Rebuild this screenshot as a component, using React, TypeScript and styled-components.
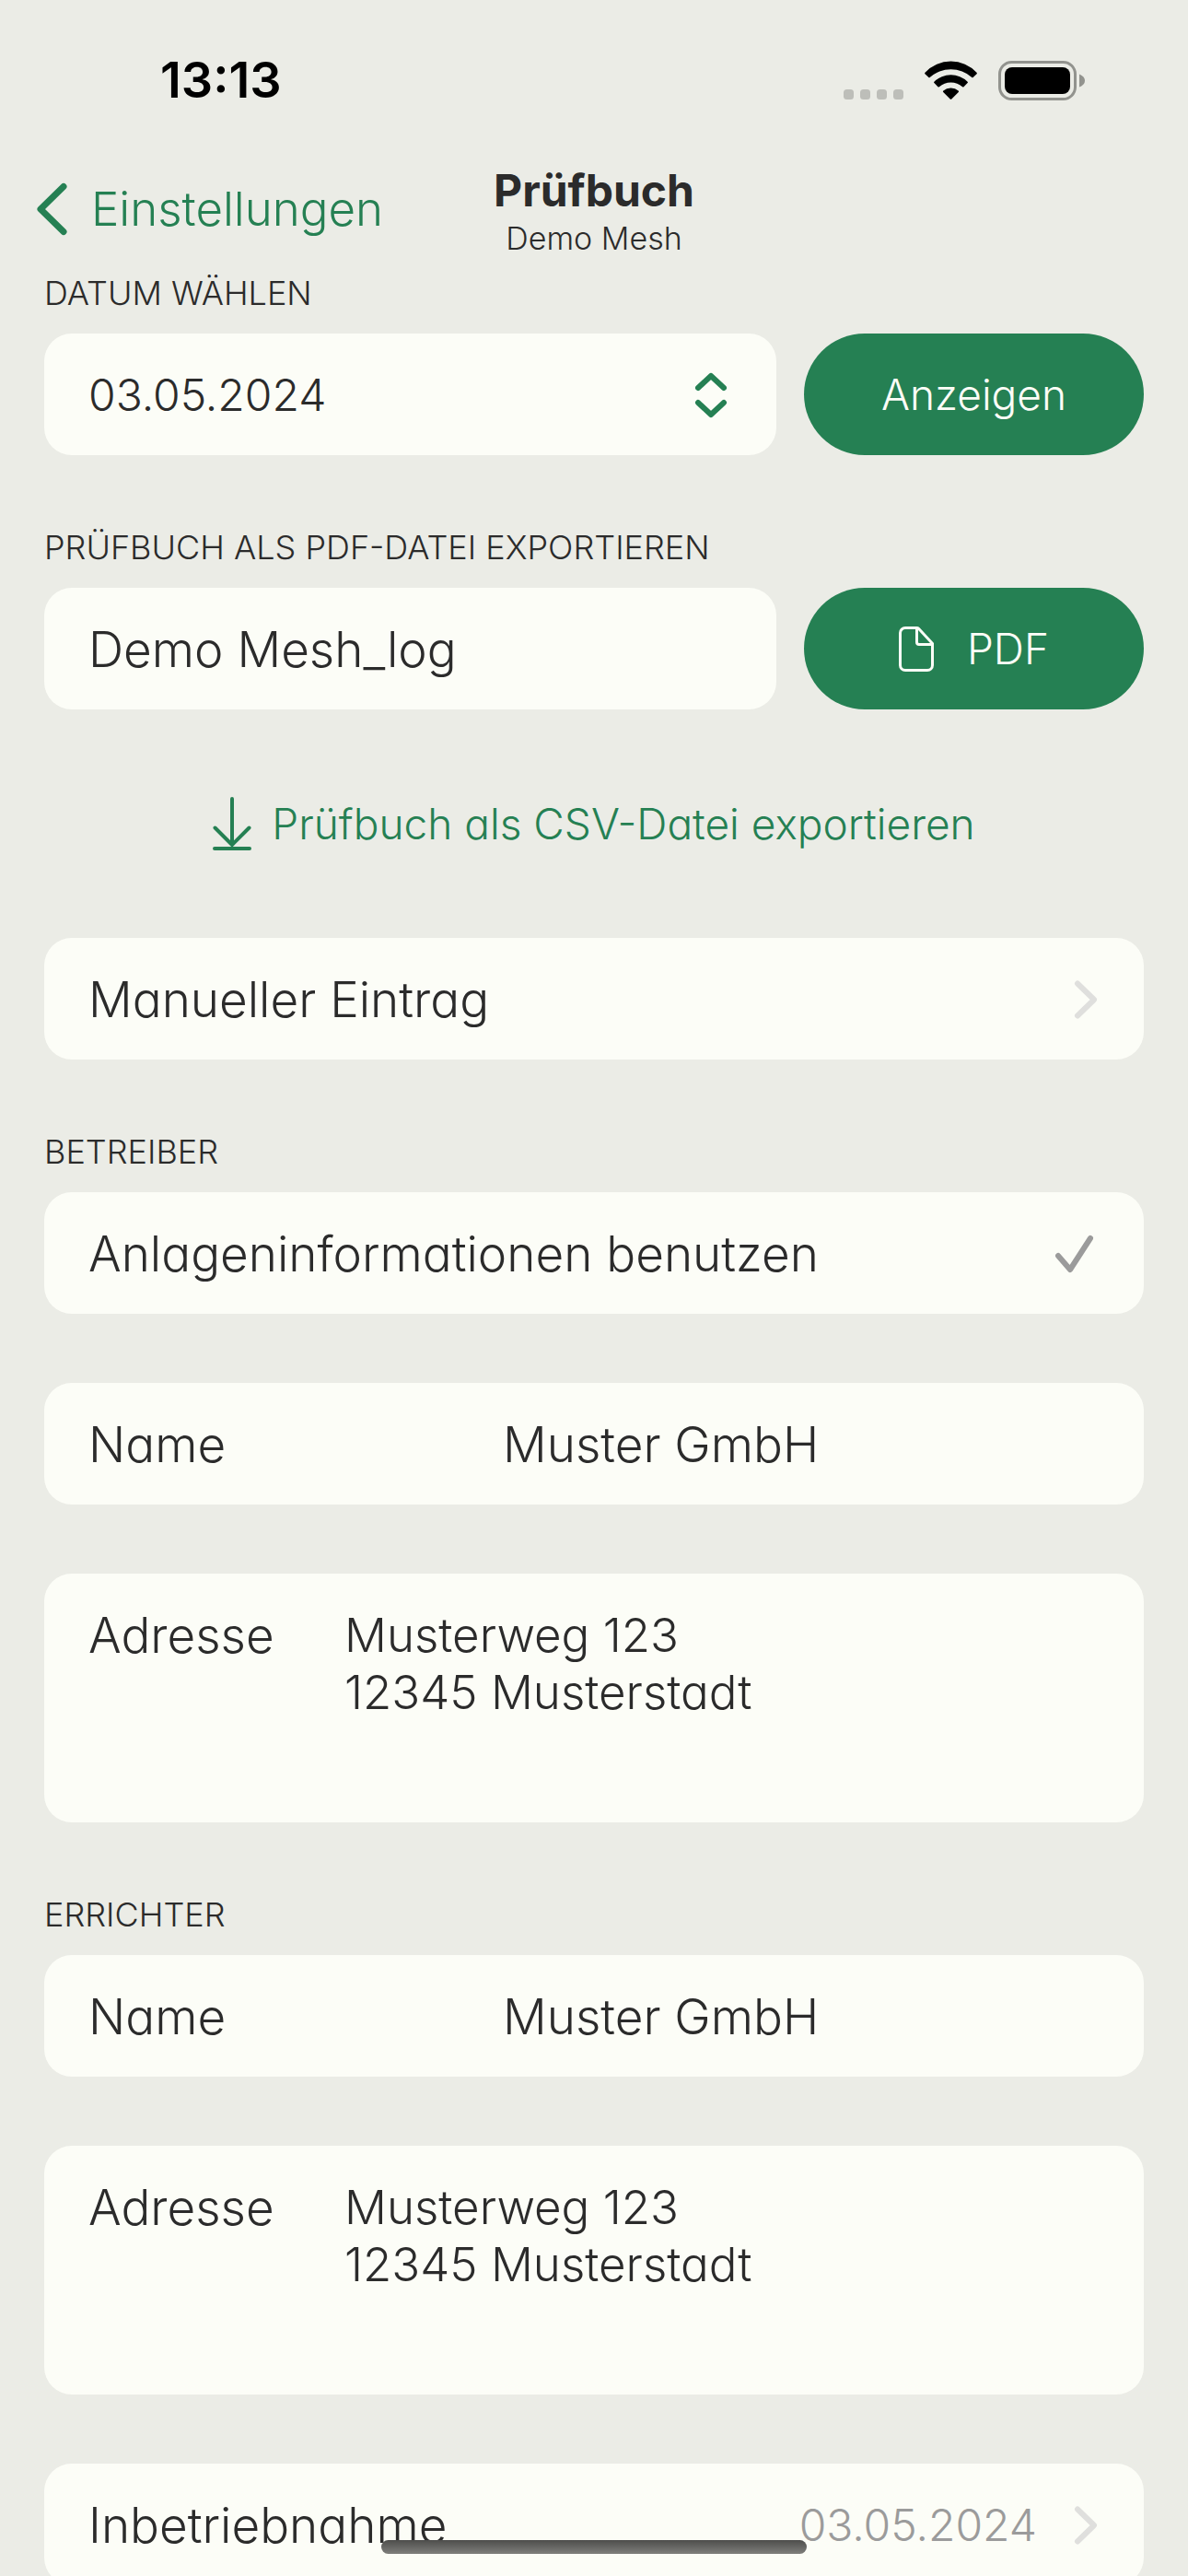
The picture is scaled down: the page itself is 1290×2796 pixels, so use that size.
import React, { useState } from "react";
import styled, { createGlobalStyle } from "styled-components";

const color = {
  page: "#ebece6",
  card: "#fcfdf7",
  green: "#258053",
  text: "#2b2b2b",
  muted: "#9b9b9b",
  faint: "#dfdfdd",
};

const GlobalStyle = createGlobalStyle`
  *, *::before, *::after { box-sizing: border-box; }
  body {
    margin: 0;
    background: ${color.page};
    color: ${color.text};
    font-family: "Century Gothic", Inter, "Liberation Sans", sans-serif;
    font-feature-settings: "cv11";
    font-weight: 300;
  }
  button, input, select, textarea {
    margin: 0;
    padding: 0;
    border: 0;
    border-radius: 0;
    background: none;
    color: inherit;
    font: inherit;
    font-feature-settings: inherit;
    appearance: none;
    outline: none;
  }
  button, select { cursor: pointer; }
  svg { display: block; flex: none; }
`;

const Screen = styled.div`
  display: flex;
  flex-direction: column;
  height: 100vh;
  overflow: hidden;
`;

const StatusBar = styled.div`
  display: flex;
  align-items: center;
  justify-content: space-between;
  height: 174px;
  padding: 0 112px 0 174px;
  color: #000;
`;

const Clock = styled.time`
  font-size: 54px;
  font-weight: 600;
  line-height: 60px;
`;

const StatusIcons = styled.div`
  display: flex;
  align-items: flex-end;
  gap: 23px;
`;

const NavBar = styled.header`
  display: grid;
  grid-template-columns: 1fr auto 1fr;
  align-items: start;
  padding: 5px 40px 10px;
`;

const BackLink = styled.a`
  display: flex;
  align-items: center;
  justify-self: start;
  gap: 26px;
  color: ${color.green};
  font-size: 51px;
  line-height: 96px;
  text-decoration: none;
`;

const Title = styled.h1`
  margin: 0;
  font-size: 48px;
  font-weight: 700;
  line-height: 56px;
  text-align: center;
`;

const Subtitle = styled.p`
  margin: 0;
  font-size: 34px;
  line-height: 48px;
  text-align: center;
`;

const Content = styled.main`
  display: flex;
  flex: 1;
  flex-direction: column;
  gap: 75px;
  min-height: 0;
  padding: 0 48px;
  overflow-y: auto;
  scrollbar-width: none;
`;

const Section = styled.section`
  display: flex;
  flex: none;
  flex-direction: column;
  gap: 75px;
`;

const Group = styled.div`
  display: flex;
  flex-direction: column;
  gap: 19px;
`;

const Caption = styled.h2`
  margin: 0;
  font-size: 36px;
  font-weight: 300;
  line-height: 50px;
  text-transform: uppercase;
`;

const SplitRow = styled.div`
  display: grid;
  grid-template-columns: minmax(0, 795fr) minmax(0, 369fr);
  gap: 30px;
`;

const Card = styled.div`
  display: flex;
  flex: none;
  align-items: flex-start;
  width: 100%;
  min-height: 132px;
  padding: 36px 48px 34px;
  border-radius: 30px;
  background: ${color.card};
  font-size: 53px;
  line-height: 62px;
  text-align: left;
`;

const ActionCard = styled(Card)`
  align-items: center;
  justify-content: space-between;
`;

const DateSelect = styled.select`
  flex: 1;
  min-width: 0;
  height: 62px;
  font-size: 48px;
`;

const TextField = styled.input`
  flex: 1;
  min-width: 0;
  height: 62px;
`;

const AddressField = styled.textarea`
  flex: 1;
  min-width: 0;
  height: 200px;
  font-size: 51px;
  resize: none;
`;

const FieldLabel = styled.label<{ $width: number }>`
  flex: 0 0 ${(p) => p.$width}px;
`;

const CheckInput = styled.input`
  width: 48px;
  height: 48px;

  & + svg {
    visibility: hidden;
    margin-left: -48px;
    pointer-events: none;
  }
  &:checked + svg {
    visibility: visible;
  }
`;

const CheckLabel = styled.label`
  flex: 1;
`;

const Trailing = styled.span`
  display: flex;
  align-items: center;
  gap: 36px;
  color: ${color.muted};
  font-size: 48px;
`;

const PillButton = styled.button`
  display: flex;
  align-items: center;
  justify-content: center;
  gap: 36px;
  border-radius: 66px;
  background: ${color.green};
  color: ${color.card};
  font-size: 46px;
`;

const ExportLink = styled.a`
  display: flex;
  flex: none;
  align-items: center;
  justify-content: center;
  gap: 22px;
  color: ${color.green};
  font-size: 46px;
  line-height: 98px;
  text-decoration: none;
`;

const HomeIndicator = styled.div`
  position: fixed;
  bottom: 24px;
  left: 50%;
  width: 462px;
  height: 15px;
  margin-left: -231px;
  border-radius: 8px;
  background: linear-gradient(#4d4d4b, #7f7f7c);
`;

const SignalIcon = () => (
  <svg width="65" height="12" viewBox="0 0 65 12" fill="#bdbeb9" aria-hidden="true">
    {[0, 18, 36, 54].map((x) => (
      <rect key={x} x={x} y="0" width="11" height="11" rx="3.5" />
    ))}
  </svg>
);

const WifiIcon = () => (
  <svg width="57" height="43" viewBox="0 0 57 43" aria-hidden="true">
    <path d="M0.5 12.7A38.3 38.3 0 0 1 56.5 12.7Q57.3 13.4 56.6 14.2L52.6 18.1Q52 18.6 51.3 18A34 34 0 0 0 5.7 18Q5 18.6 4.4 18.1L0.4 14.2Q-0.3 13.4 0.5 12.7Z" />
    <path d="M10.4 22.7A26 26 0 0 1 46.6 22.7Q47.3 23.4 46.6 24.1L42.5 28.2Q41.8 28.8 41.1 28.2A19 19 0 0 0 15.9 28.2Q15.2 28.8 14.5 28.2L10.4 24.1Q9.7 23.4 10.4 22.7Z" />
    <path d="M20.3 32.5A12.5 12.5 0 0 1 36.7 32.5Q37.5 33.3 36.8 34L29.3 41.4Q28.5 42.2 27.7 41.4L20.2 34Q19.5 33.3 20.3 32.5Z" />
  </svg>
);

const BatteryIcon = () => (
  <svg width="94" height="43" viewBox="0 0 94 43" aria-hidden="true">
    <rect x="1.5" y="1.5" width="82" height="40" rx="13" fill="none" stroke="#92938e" strokeWidth="3" />
    <rect x="7" y="7" width="71" height="29" rx="8" />
    <path d="M88 14.5Q94 17 94 21.5T88 28.5Z" fill="#92938e" />
  </svg>
);

const BackIcon = () => (
  <svg width="33" height="58" viewBox="0 0 33 58" fill="none" stroke="currentColor" strokeWidth="7" strokeLinecap="round" strokeLinejoin="round" aria-hidden="true">
    <path d="M29 4.5L4 29L29 53.5" />
  </svg>
);

const SorterIcon = () => (
  <svg width="46" height="50" viewBox="0 0 46 50" fill="none" stroke={color.green} strokeWidth="6" strokeLinecap="round" strokeLinejoin="round" aria-hidden="true">
    <path d="M9 17L23 4L37 17M9 33L23 46L37 33" />
  </svg>
);

const FileIcon = () => (
  <svg width="38" height="49" viewBox="0 0 38 49" fill="none" stroke="currentColor" strokeWidth="3" strokeLinejoin="round" aria-hidden="true">
    <path d="M19.5 1.5H7A5.5 5.5 0 0 0 1.5 7V42A5.5 5.5 0 0 0 7 47.5H31A5.5 5.5 0 0 0 36.5 42V18.5L21.5 2.2Q20.8 1.5 19.5 1.5V17Q19.5 19.5 22 19.5H36.5" />
  </svg>
);

const DownloadIcon = () => (
  <svg width="42" height="58" viewBox="0 0 42 58" fill="none" stroke="currentColor" strokeWidth="4" strokeLinecap="round" strokeLinejoin="round" aria-hidden="true">
    <path d="M21 2V52M2.5 33.5L21 52L39.5 33.5M2 56H40" />
  </svg>
);

const ChevronIcon = () => (
  <svg width="32" height="42" viewBox="0 0 32 42" fill="none" stroke={color.faint} strokeWidth="6" strokeLinecap="round" strokeLinejoin="round" aria-hidden="true">
    <path d="M8 3.5L26 21L8 38.5" />
  </svg>
);

const CheckIcon = () => (
  <svg width="48" height="42" viewBox="0 0 48 42" fill="none" stroke={color.muted} strokeWidth="6" strokeLinecap="round" strokeLinejoin="round" aria-hidden="true">
    <path d="M3 23L16 38L38 4" />
  </svg>
);

const NameCard = ({ id }: { id: string }) => (
  <Card>
    <FieldLabel $width={450} htmlFor={id}>Name</FieldLabel>
    <TextField id={id} defaultValue="Muster GmbH" />
  </Card>
);

const AddressCard = ({ id }: { id: string }) => (
  <Card>
    <FieldLabel $width={278} htmlFor={id}>Adresse</FieldLabel>
    <AddressField id={id} defaultValue={"Musterweg 123\n12345 Musterstadt"} />
  </Card>
);

export default function App() {
  const [useSiteInfo, setUseSiteInfo] = useState(true);

  return (
    <Screen>
      <GlobalStyle />
      <StatusBar>
        <Clock>13:13</Clock>
        <StatusIcons>
          <SignalIcon />
          <WifiIcon />
          <BatteryIcon />
        </StatusIcons>
      </StatusBar>

      <NavBar>
        <BackLink href="#einstellungen">
          <BackIcon />
          Einstellungen
        </BackLink>
        <div>
          <Title>Prüfbuch</Title>
          <Subtitle>Demo Mesh</Subtitle>
        </div>
      </NavBar>

      <Content>
        <Group>
          <Caption as="label" htmlFor="log-date">Datum wählen</Caption>
          <SplitRow>
            <ActionCard>
              <DateSelect id="log-date" defaultValue="03.05.2024">
                <option>03.05.2024</option>
              </DateSelect>
              <SorterIcon />
            </ActionCard>
            <PillButton type="button">Anzeigen</PillButton>
          </SplitRow>
        </Group>

        <Group>
          <Caption as="label" htmlFor="file-name">Prüfbuch als PDF-Datei exportieren</Caption>
          <SplitRow>
            <Card>
              <TextField id="file-name" defaultValue="Demo Mesh_log" />
            </Card>
            <PillButton type="button">
              <FileIcon />
              PDF
            </PillButton>
          </SplitRow>
        </Group>

        <ExportLink href="#csv">
          <DownloadIcon />
          Prüfbuch als CSV-Datei exportieren
        </ExportLink>

        <ActionCard as="button" type="button">
          Manueller Eintrag
          <ChevronIcon />
        </ActionCard>

        <Section>
          <Group>
            <Caption>Betreiber</Caption>
            <ActionCard>
              <CheckLabel htmlFor="site-info">Anlageninformationen benutzen</CheckLabel>
              <CheckInput
                id="site-info"
                type="checkbox"
                checked={useSiteInfo}
                onChange={(e) => setUseSiteInfo(e.target.checked)}
              />
              <CheckIcon />
            </ActionCard>
          </Group>
          <NameCard id="operator-name" />
          <AddressCard id="operator-address" />
        </Section>

        <Section>
          <Group>
            <Caption>Errichter</Caption>
            <NameCard id="installer-name" />
          </Group>
          <AddressCard id="installer-address" />
          <ActionCard as="button" type="button">
            Inbetriebnahme
            <Trailing>
              03.05.2024
              <ChevronIcon />
            </Trailing>
          </ActionCard>
        </Section>
      </Content>

      <HomeIndicator />
    </Screen>
  );
}
